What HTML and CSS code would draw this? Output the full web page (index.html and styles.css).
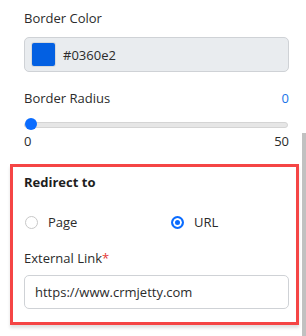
FILE: index.html
```html
<!DOCTYPE html>
<html>
<head>
<meta charset="utf-8">
<link rel="stylesheet" href="styles.css">
</head>
<body>
<div class="panel">
  <div class="field">
    <div class="label">Border Color</div>
    <div class="color-input">
      <span class="swatch"></span>
      <span class="color-text">#0360e2</span>
    </div>
  </div>
  <div class="field radius">
    <div class="label-row">
      <span class="label">Border Radius</span>
      <span class="value">0</span>
    </div>
    <div class="slider">
      <div class="track"></div>
      <div class="thumb"></div>
    </div>
    <div class="range-labels">
      <span>0</span>
      <span>50</span>
    </div>
  </div>
</div>
<div class="redirect">
  <div class="title">Redirect to</div>
  <div class="radios">
    <label class="radio"><span class="circle"></span>Page</label>
    <label class="radio"><span class="circle checked"></span>URL</label>
  </div>
  <div class="label">External Link<span class="req">*</span></div>
  <div class="text-input">https://www.crmjetty.com</div>
</div>
<div class="scrollbar"></div>
</body>
</html>
```
FILE: styles.css
```css
html, body {
  margin: 0;
  padding: 0;
  background: #fff;
}
body {
  font-family: "Open Sans", "Noto Sans", sans-serif;
  font-size: 13px;
  line-height: 18px;
  color: #2b2b2b;
  width: 306px;
  height: 336px;
  overflow: hidden;
  position: relative;
}
.panel {
  padding: 9px 17px 0 24px;
}
.label {
  color: #2b2b2b;
}
.color-input {
  margin-top: 10px;
  height: 33px;
  border: 1px solid #cfd2d6;
  border-radius: 5px;
  background: #e9ecef;
  display: flex;
  align-items: center;
  padding-left: 7px;
}
.swatch {
  width: 23px;
  height: 23px;
  background: #0360e2;
  border-radius: 2px;
  box-shadow: 0 0 0 1px rgba(0,0,0,0.08);
}
.color-text {
  margin-left: 8px;
}
.radius {
  margin-top: 17px;
}
.label-row {
  display: flex;
  justify-content: space-between;
}
.value {
  color: #1a73e8;
}
.slider {
  position: relative;
  height: 14px;
  margin-top: 10px;
}
.track {
  position: absolute;
  left: 0;
  right: 1px;
  top: 5px;
  height: 4px;
  background: #e6e6e6;
  border: 1px solid #d4d4d4;
  border-radius: 3px;
}
.thumb {
  position: absolute;
  left: 1px;
  top: 1px;
  width: 12px;
  height: 12px;
  border-radius: 50%;
  background: #0a6cff;
}
.range-labels {
  display: flex;
  justify-content: space-between;
  margin-top: 1px;
}
.redirect {
  margin: 14px 7px 0 10px;
  border: 3px solid #f54545;
  padding: 6px 7px 13px 11px;
  box-shadow: 0 3px 3px rgba(0,0,0,0.12);
}
.title {
  font-weight: 700;
  color: #1e1e1e;
}
.radios {
  display: grid;
  grid-template-columns: 146px auto;
  margin-top: 22px;
  margin-bottom: 18px;
}
.radio {
  display: flex;
  align-items: center;
}
.circle {
  width: 11px;
  height: 11px;
  border: 1px solid #c8c8c8;
  border-radius: 50%;
  margin: 0 10px 0 1px;
  background: #fff;
}
.circle.checked {
  border: 2px solid #0a6cff;
  width: 9px;
  height: 9px;
  background: #0a6cff;
  box-shadow: inset 0 0 0 2px #fff;
}
.req {
  color: #e53935;
}
.text-input {
  margin-top: 8px;
  height: 32px;
  border: 1px solid #cfd2d6;
  border-radius: 5px;
  padding-left: 10px;
  display: flex;
  align-items: center;
}
.scrollbar {
  position: absolute;
  right: 0;
  top: 133px;
  width: 4px;
  height: 203px;
  background: #c1c1c1;
}
```
